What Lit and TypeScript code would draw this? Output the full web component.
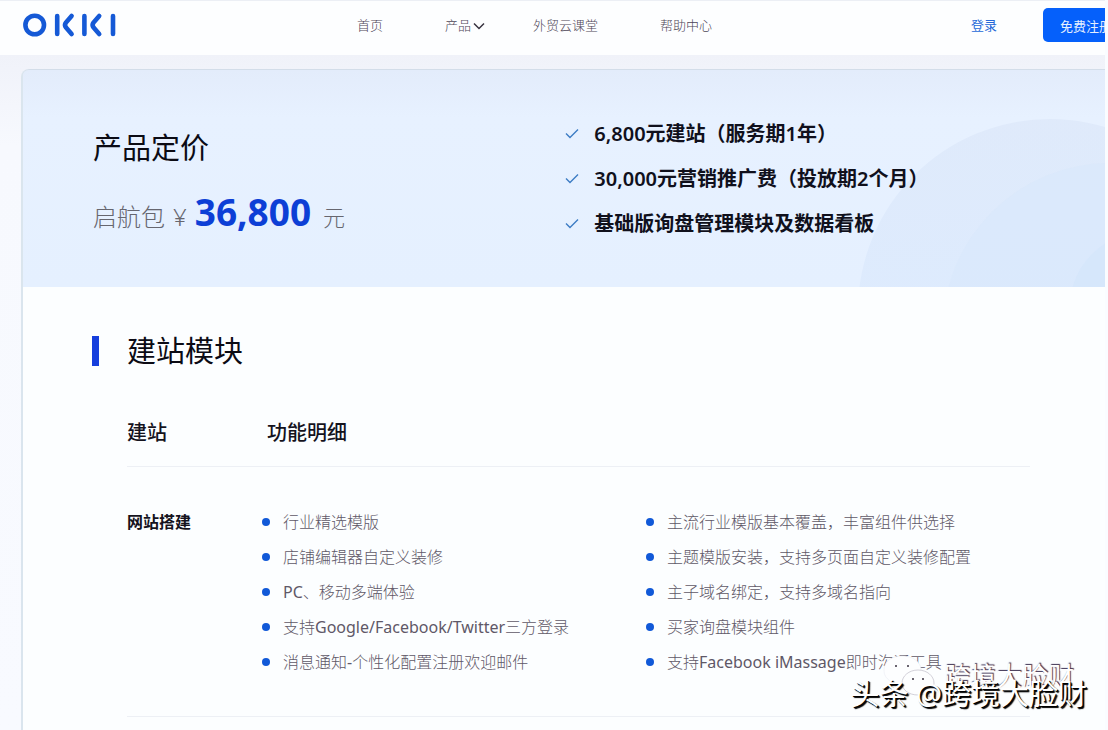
import { LitElement, html, css } from "lit";
import { customElement, property } from "lit/decorators.js";

const FEATURES_LEFT = [
  "行业精选模版",
  "店铺编辑器自定义装修",
  "PC、移动多端体验",
  "支持Google/Facebook/Twitter三方登录",
  "消息通知-个性化配置注册欢迎邮件",
];

const FEATURES_RIGHT = [
  "主流行业模版基本覆盖，丰富组件供选择",
  "主题模版安装，支持多页面自定义装修配置",
  "主子域名绑定，支持多域名指向",
  "买家询盘模块组件",
  "支持Facebook iMassage即时沟通工具",
];

const BENEFITS = [
  "6,800元建站（服务期1年）",
  "30,000元营销推广费（投放期2个月）",
  "基础版询盘管理模块及数据看板",
];

@customElement("site-header")
class SiteHeader extends LitElement {
  static styles = css`
    :host {
      display: block;
      overflow: hidden;
      background: #fdfeff;
      border-top: 1px solid #eceff5;
    }
    .bar {
      display: flex;
      align-items: center;
      box-sizing: border-box;
      height: 54px;
      min-width: 1152px;
      padding: 0 23px 6px;
    }
    .logo {
      display: block;
      width: 94px;
      height: 26px;
    }
    .nav {
      display: flex;
      gap: 62px;
      margin-left: 240px;
    }
    a {
      position: relative;
      display: block;
      color: #4d4657;
      font-size: 13px;
      line-height: 20px;
      text-decoration: none;
    }
    .nav a {
      font-weight: 300;
    }
    .chevron {
      position: absolute;
      left: 100%;
      top: 6px;
      margin-left: 2px;
      width: 12px;
      height: 10px;
    }
    .account {
      display: flex;
      align-items: center;
      gap: 46px;
      margin-left: auto;
    }
    .account a {
      color: #2468d8;
    }
    button {
      height: 34px;
      padding: 0 17px;
      border: 0;
      border-radius: 5px;
      background: #0560fb;
      color: #e6f0ff;
      font: inherit;
      font-size: 13px;
    }
  `;

  render() {
    return html`
      <div class="bar">
        <a href="#" aria-label="OKKI">
          <svg class="logo" viewBox="0 0 94 26" fill="none" stroke="#1559d6" stroke-width="4.6"
            stroke-linecap="round" stroke-linejoin="round">
            <circle cx="11.7" cy="13" r="9.3" />
            <path d="M34.2 4v18M48.6 4 43 10.4Q41 13 43 15.6L48.6 22M61.4 4v18M76.2 4 70.6 10.4Q68.6 13 70.6 15.6L76.2 22M90 4v18" />
          </svg>
        </a>
        <nav class="nav">
          <a href="#">首页</a>
          <a href="#">产品
            <svg class="chevron" viewBox="0 0 12 10" fill="none" stroke="#37323f" stroke-width="1.5">
              <path d="M1 2.5 6 7.5 11 2.5" />
            </svg>
          </a>
          <a href="#">外贸云课堂</a>
          <a href="#">帮助中心</a>
        </nav>
        <div class="account">
          <a href="#">登录</a>
          <button type="button">免费注册</button>
        </div>
      </div>
    `;
  }
}

@customElement("price-hero")
class PriceHero extends LitElement {
  static styles = css`
    :host {
      position: relative;
      display: grid;
      grid-template-columns: 7fr 8fr;
      align-items: center;
      box-sizing: border-box;
      min-height: 218px;
      padding-left: 70px;
      overflow: hidden;
      border-top: 1px solid #d3dde9;
      border-top-left-radius: 6px;
      background: linear-gradient(180deg, #e3ecfb 0, #e7f1ff 22%, #e5f0ff 100%);
    }
    .rings {
      position: absolute;
      right: 0;
      bottom: 0;
      width: 260px;
      height: 180px;
    }
    .offer,
    .benefits {
      position: relative;
    }
    .offer {
      padding-top: 10px;
    }
    h1 {
      margin: 0;
      color: #0b0b14;
      font-size: 29px;
      font-weight: 400;
      line-height: 48px;
    }
    .price {
      display: flex;
      align-items: baseline;
      gap: 8px;
      margin: 14px 0 0;
      color: #66666f;
      font-size: 24px;
      font-weight: 300;
      line-height: 52px;
    }
    .amount {
      color: #0d3fd6;
      font-size: 37px;
      font-weight: 700;
    }
    .unit {
      margin-left: 4px;
      font-size: 22px;
    }
    .benefits {
      margin: 0;
      padding: 0;
      list-style: none;
    }
    .benefits li {
      display: flex;
      align-items: center;
      gap: 15px;
      color: #10101c;
      font-size: 20px;
      font-weight: 600;
      line-height: 45px;
    }
    .tick {
      width: 14px;
      height: 12px;
    }
  `;

  render() {
    return html`
      <svg class="rings" viewBox="0 0 260 180" aria-hidden="true">
        <defs>
          <linearGradient id="ring" x1="0" y1="0" x2="0" y2="1">
            <stop offset="0" stop-color="#dce7f9" stop-opacity="0.7" />
            <stop offset="0.5" stop-color="#dae9fd" stop-opacity="0.7" />
          </linearGradient>
        </defs>
        <circle cx="205" cy="204" r="192" fill="url(#ring)" />
        <circle cx="265" cy="223" r="167" fill="#d7e7fc" fill-opacity="0.5" />
        <circle cx="300" cy="200" r="75" fill="#cfe3fb" fill-opacity="0.4" />
      </svg>
      <div class="offer">
        <h1>产品定价</h1>
        <p class="price">
          <span>启航包</span><span>¥</span><strong class="amount">36,800</strong><span class="unit">元</span>
        </p>
      </div>
      <ul class="benefits">
        ${BENEFITS.map(
          (text) => html`<li>
            <svg class="tick" viewBox="0 0 14 12" fill="none" stroke="#3d7cc4" stroke-width="1.4">
              <path d="M1 5.5 5 9.5 13 1.5" />
            </svg>
            <span>${text}</span>
          </li>`
        )}
      </ul>
    `;
  }
}

@customElement("feature-list")
class FeatureList extends LitElement {
  @property({ attribute: false }) items: string[] = [];

  static styles = css`
    :host {
      display: block;
    }
    ul {
      margin: 0;
      padding: 0;
      list-style: none;
    }
    li {
      display: flex;
      align-items: center;
      gap: 13px;
      color: #5f5867;
      font-family: "Noto Sans", "Noto Sans CJK SC Light", "Noto Sans CJK SC", sans-serif;
      font-size: 16px;
      line-height: 35px;
      white-space: nowrap;
    }
    .dot {
      width: 8px;
      height: 8px;
      margin-bottom: 2px;
      border-radius: 50%;
      background: #1159d8;
    }
  `;

  render() {
    return html`<ul>
      ${this.items.map((item) => html`<li><span class="dot"></span><span>${item}</span></li>`)}
    </ul>`;
  }
}

@customElement("app-root")
class AppRoot extends LitElement {
  static styles = css`
    :host {
      position: relative;
      display: flex;
      flex-direction: column;
      box-sizing: border-box;
      min-height: 100vh;
      padding-right: 3px;
      overflow: hidden;
      background: #fafcff;
      font-family: "Noto Sans", "Noto Sans CJK SC", sans-serif;
    }
    .page {
      display: flex;
      flex: 1;
      padding: 14px 0 0 21px;
      background: linear-gradient(180deg, #f0f2f9 0, #f1f3fa 14px, #f7f9fe 90px, #f8faff 100%);
    }
    .card {
      flex: 1;
      border-left: 2px solid #dae5ee;
      border-top-left-radius: 8px;
      background: #fcfeff;
    }
    .module {
      padding: 41px 75px 0 69px;
    }
    h2 {
      display: flex;
      align-items: center;
      gap: 28px;
      margin: 0;
      color: #0b0b14;
      font-size: 29px;
      font-weight: 400;
      line-height: 46px;
    }
    .mark {
      width: 7px;
      height: 30px;
      background: #163fdd;
    }
    .table-wrap {
      padding: 26px 0 0 35px;
    }
    table {
      width: 100%;
      border-collapse: collapse;
      table-layout: fixed;
    }
    th {
      padding: 0;
      color: #15131d;
      text-align: left;
      vertical-align: top;
    }
    thead th {
      font-size: 20px;
      font-weight: 500;
      line-height: 66px;
    }
    thead th + th {
      padding-left: 5px;
    }
    .group {
      width: 135px;
    }
    tr {
      border-bottom: 1px solid #edf0f5;
    }
    tbody th {
      padding-top: 38px;
      font-size: 16px;
      font-weight: 600;
      line-height: 35px;
    }
    td {
      padding: 38px 0 36px;
    }
    .columns {
      display: grid;
      grid-template-columns: 1fr 1fr;
    }
    .watermark {
      position: absolute;
      right: 21px;
      bottom: 18px;
      color: #fff;
      font-size: 29px;
      line-height: 36px;
      white-space: nowrap;
      text-shadow: 1px 1px 0 #000, 2px 2px 1px #000;
    }
    .watermark-small {
      position: absolute;
      right: 34px;
      bottom: 31px;
      display: flex;
      align-items: center;
      gap: 8px;
      color: #fff;
      font-size: 26px;
      line-height: 36px;
      white-space: nowrap;
      text-shadow: 1px -1px 1px #3c3050;
    }
    .bubbles {
      width: 54px;
      height: 46px;
    }
  `;

  render() {
    return html`
      <site-header></site-header>
      <main class="page">
        <div class="card">
          <price-hero></price-hero>
          <section class="module">
            <h2><span class="mark"></span>建站模块</h2>
            <div class="table-wrap">
              <table>
                <thead>
                  <tr>
                    <th class="group" scope="col">建站</th>
                    <th scope="col">功能明细</th>
                  </tr>
                </thead>
                <tbody>
                  <tr>
                    <th scope="row">网站搭建</th>
                    <td>
                      <div class="columns">
                        <feature-list .items=${FEATURES_LEFT}></feature-list>
                        <feature-list .items=${FEATURES_RIGHT}></feature-list>
                      </div>
                    </td>
                  </tr>
                </tbody>
              </table>
            </div>
          </section>
        </div>
      </main>
      <div class="watermark-small" aria-hidden="true">
        <svg class="bubbles" viewBox="0 0 54 46">
          <path d="M20 3C9 3 2 9 2 17c0 5 2 8 6 11l-2 6 7-4c2 1 5 1 8 1 10 0 18-6 18-14S31 3 20 3Z" fill="#fdfeff" stroke="#e5e6ee" stroke-width="0.5" />
          <path d="M36 17c-9 0-16 6-16 13s7 12 16 12c2 0 4 0 6-1l6 3-2-5c4-2 6-6 6-9 0-7-7-13-16-13Z" fill="#fdfeff" stroke="#b5b2c0" stroke-width="0.6" />
          <g fill="#37313f"><circle cx="14" cy="13" r="1" /><circle cx="26" cy="13" r="1" /><circle cx="31" cy="26" r="1" /><circle cx="41" cy="26" r="1" /></g>
        </svg>
        <span>跨境大脸财</span>
      </div>
      <div class="watermark">头条 @跨境大脸财</div>
    `;
  }
}
